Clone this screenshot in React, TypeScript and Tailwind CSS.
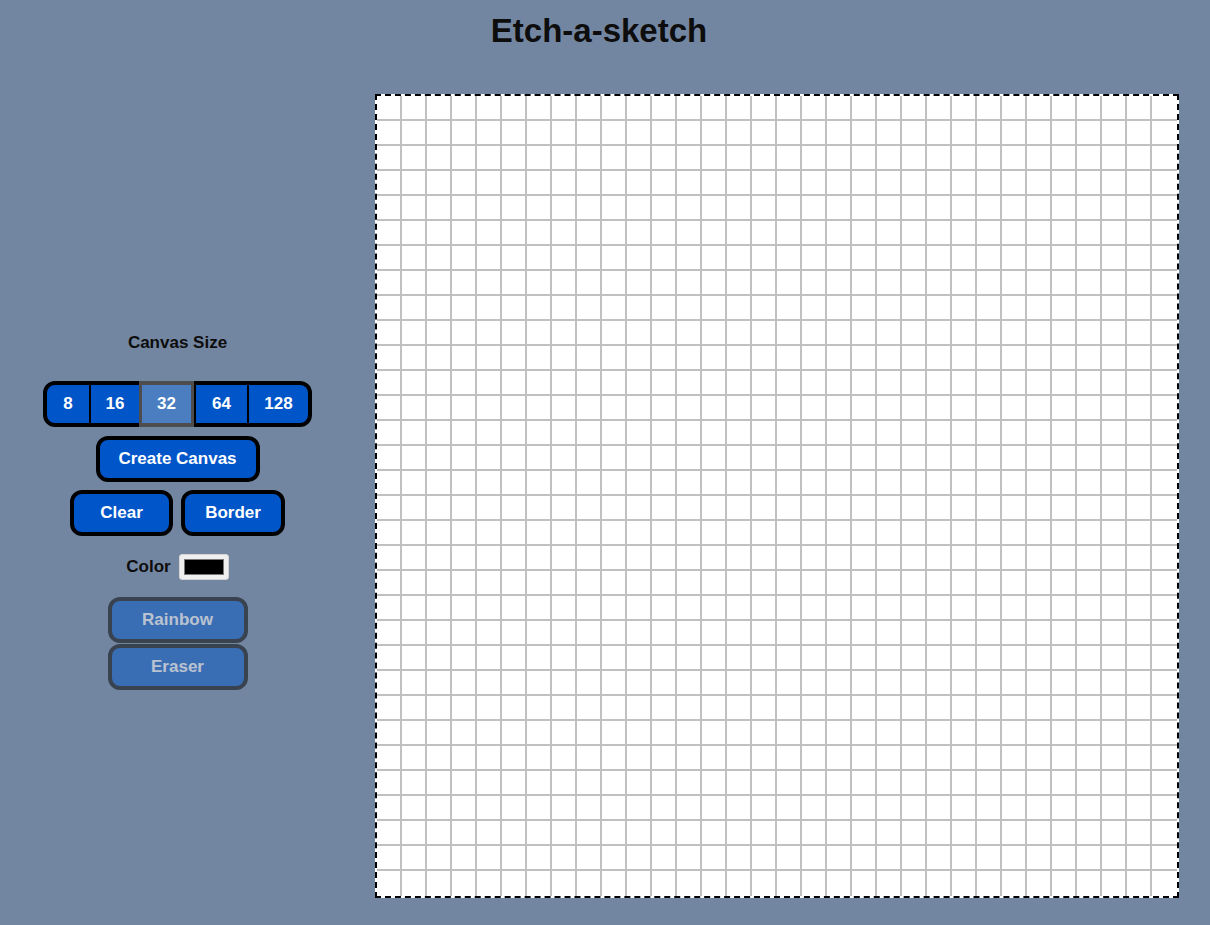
import React from "react";

const SIZES = [8, 16, 32, 64, 128];
const CELLS = Array.from({ length: 32 * 32 });

function SizeButton({ size }: { size: number }) {
  // each segment carries its own piece of the black outline
  const edges: Record<number, string> = {
    8: "w-[48px] border-y-4 border-l-4 border-r-2 border-black rounded-l-[12px] bg-[#0055c8]",
    16: "w-[48px] border-y-4 border-black bg-[#0055c8]",
    32: "w-[55px] border-y-4 border-x-[3px] border-[#4d4d4d] bg-[#4a7ec0]",
    64: "w-[55px] border-y-4 border-x-2 border-black bg-[#0055c8]",
    128: "w-[63px] border-y-4 border-r-4 border-black rounded-r-[12px] bg-[#0055c8]",
  };
  return (
    <button className={`${edges[size]} h-[46px] text-[17px] font-bold text-white`}>
      {size}
    </button>
  );
}

function PanelButton({
  label,
  width,
  dim = false,
}: {
  label: string;
  width: string;
  dim?: boolean;
}) {
  return (
    <button
      className={`${width} h-[46px] rounded-[12px] border-4 border-black bg-[#0055c8] text-[17px] font-bold text-white ${
        dim ? "opacity-50" : ""
      }`}
    >
      {label}
    </button>
  );
}

export default function App() {
  return (
    <div
      className="min-h-[925px] w-full bg-[#7386a1] text-[#0d0d0d]"
      style={{ fontFamily: '"Liberation Sans", Arial, sans-serif' }}
    >
      <h1 className="pt-[12px] pr-[12px] text-center text-[33px] font-bold leading-[38px]">
        Etch-a-sketch
      </h1>

      <div className="mt-[44px] flex">
        <div className="flex w-[355px] flex-col items-center pt-[238px]">
          <p className="text-[17px] font-bold leading-[22px]">Canvas Size</p>

          <div className="mt-[27px] flex">
            {SIZES.map((s) => (
              <SizeButton key={s} size={s} />
            ))}
          </div>

          <div className="mt-[9px]">
            <PanelButton label="Create Canvas" width="w-[164px]" />
          </div>

          <div className="mt-[8px] flex gap-[8px]">
            <PanelButton label="Clear" width="w-[103px]" />
            <PanelButton label="Border" width="w-[104px]" />
          </div>

          <div className="mt-[18px] flex items-center gap-[8px]">
            <span className="text-[17px] font-bold">Color</span>
            <div className="flex h-[26px] w-[50px] items-center justify-center rounded-[3px] border border-[#d4d4d4] bg-[#efefef]">
              <div className="h-[16px] w-[40px] border border-[#777] bg-black" />
            </div>
          </div>

          <div className="mt-[17px] flex flex-col gap-[1px]">
            <PanelButton label="Rainbow" width="w-[140px]" dim />
            <PanelButton label="Eraser" width="w-[140px]" dim />
          </div>
        </div>

        <div className="ml-[20px] h-[804px] w-[804px] border-2 border-dashed border-black bg-white">
          <div className="grid h-[800px] w-[800px] grid-cols-[repeat(31,23px)_25px] grid-rows-[repeat(31,23px)_25px] gap-[2px] bg-[#c0c0c0]">
            {CELLS.map((_, i) => (
              <div key={i} className="bg-white" />
            ))}
          </div>
        </div>
      </div>
    </div>
  );
}
